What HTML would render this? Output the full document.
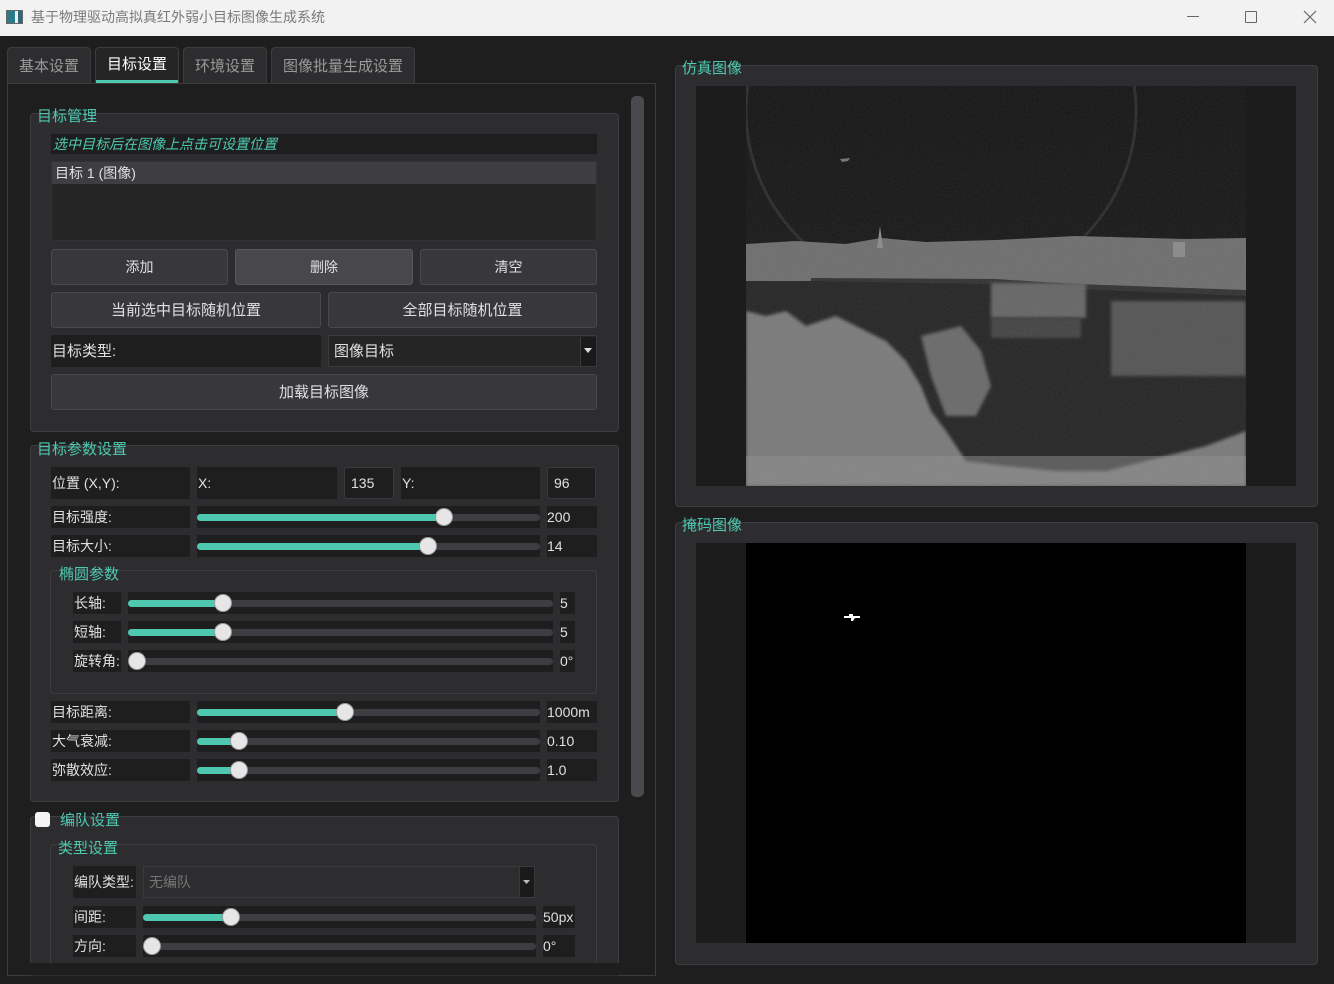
<!DOCTYPE html>
<html><head><meta charset="utf-8">
<style>
*{box-sizing:border-box;margin:0;padding:0}
body{width:1334px;height:984px;overflow:hidden;background:#1e1e1e;font-family:"Liberation Sans","Noto Sans CJK SC",sans-serif;font-size:14px;color:#e0e0e0;position:relative}
.a{position:absolute}
.tb{left:0;top:0;width:1334px;height:36px;background:#f2f2f2}
.tab{top:47px;height:36px;background:#2d2d30;border:1px solid #3c3c3f;border-bottom:none;border-radius:4px 4px 0 0;color:#9a9a9a;font-size:15px;text-align:center;line-height:38px}
.grp{background:#2d2d30;border:1px solid #3e3e42;border-radius:4px}
.gt{color:#4ec9b0;font-size:15px;line-height:18px}
.lbl{background:#1e1e1e;line-height:22px;padding-left:1px;color:#e0e0e0}
.btn{background:#38383c;border:1px solid #4a4a4e;border-radius:3px;text-align:center;color:#e0e0e0}
.sl{background:#1e1e1e}
.gr{position:absolute;left:0;right:0;top:50%;height:7px;margin-top:-3px;background:#3e3e42;border-radius:4px}
.fl{position:absolute;left:0;top:50%;height:7px;margin-top:-3px;background:#4ec9b0;border-radius:4px}
.hd{position:absolute;top:50%;width:18px;height:18px;margin:-9px 0 0 -9px;border-radius:50%;background:#e6e6e6;border:1px solid #999}
.val{background:#1e1e1e;line-height:22px;color:#e0e0e0}
</style></head><body>
<div class="a tb"></div>
<div class="a" style="left:6px;top:10px;width:17px;height:14px;border:1px solid #666;background:linear-gradient(90deg,#2a7a8a 0 55%,#eee 55% 75%,#2a6a7a 75%)"></div>
<div class="a" style="left:31px;top:8px;color:#7a7a7a;font-size:14px;line-height:18px">基于物理驱动高拟真红外弱小目标图像生成系统</div>
<div class="a" style="left:1187px;top:16px;width:12px;height:1px;background:#666"></div>
<div class="a" style="left:1245px;top:11px;width:12px;height:12px;border:1px solid #666;border-radius:1px"></div>
<svg class="a" style="left:1303px;top:10px" width="14" height="14"><path d="M1 1L13 13M13 1L1 13" stroke="#666" stroke-width="1.2"/></svg>

<div class="a tab" style="left:7px;width:84px">基本设置</div>
<div class="a tab" style="left:95px;width:84px;color:#fff;background:#252526;line-height:34px">目标设置<div class="a" style="left:0;right:0;bottom:0;height:3px;background:#4ec9b0"></div></div>
<div class="a tab" style="left:183px;width:84px">环境设置</div>
<div class="a tab" style="left:271px;width:144px">图像批量生成设置</div>
<div class="a" style="left:7px;top:83px;width:649px;height:893px;border:1px solid #3c3c3f;background:#1e1e1e"></div>
<div class="a" style="left:631px;top:96px;width:13px;height:701px;background:#4a4a4e;border-radius:5px"></div>

<!-- group 1 -->
<div class="a grp" style="left:30px;top:113px;width:589px;height:319px"></div>
<div class="a gt" style="left:37px;top:108px">目标管理</div>
<div class="a" style="left:51px;top:134px;width:546px;height:20px;background:#1e1e1e;color:#4ec9b0;font-style:italic;line-height:21px;padding-left:2px">选中目标后在图像上点击可设置位置</div>
<div class="a" style="left:51px;top:161px;width:546px;height:80px;background:#252526;border:1px solid #333;border-radius:2px"></div>
<div class="a" style="left:52px;top:162px;width:544px;height:22px;background:#3e3e42;line-height:22px;padding-left:3px">目标 1 (图像)</div>
<div class="a btn" style="left:51px;top:249px;width:177px;height:36px;line-height:35px">添加</div>
<div class="a btn" style="left:235px;top:249px;width:178px;height:36px;line-height:35px;background:#48484c;border-color:#58585c">删除</div>
<div class="a btn" style="left:420px;top:249px;width:177px;height:36px;line-height:35px">清空</div>
<div class="a btn" style="left:51px;top:292px;width:270px;height:36px;line-height:35px;font-size:15px">当前选中目标随机位置</div>
<div class="a btn" style="left:328px;top:292px;width:269px;height:36px;line-height:35px;font-size:15px">全部目标随机位置</div>
<div class="a lbl" style="left:51px;top:335px;width:270px;height:32px;line-height:33px;font-size:15px">目标类型:</div>
<div class="a" style="left:328px;top:335px;width:269px;height:32px;background:#252526;border:1px solid #3a3a3d;line-height:31px;padding-left:5px;font-size:15px">图像目标</div>
<div class="a" style="left:580px;top:337px;width:16px;height:29px;background:#1a1a1a;border-left:1px solid #3a3a3d"></div>
<svg class="a" style="left:584px;top:348px" width="8" height="5"><path d="M0 0H8L4 5Z" fill="#ddd"/></svg>
<div class="a btn" style="left:51px;top:374px;width:546px;height:36px;line-height:35px;font-size:15px">加载目标图像</div>

<!-- group 2 -->
<div class="a grp" style="left:30px;top:445px;width:589px;height:357px"></div>
<div class="a gt" style="left:37px;top:441px">目标参数设置</div>
<div class="a lbl" style="left:51px;top:467px;width:139px;height:32px;line-height:33px">位置 (X,Y):</div>
<div class="a lbl" style="left:197px;top:467px;width:140px;height:32px;line-height:33px">X:</div>
<div class="a" style="left:344px;top:467px;width:50px;height:32px;border:1px solid #3a3a3d;border-radius:3px;background:#1e1e1e;line-height:31px;padding-left:6px">135</div>
<div class="a lbl" style="left:401px;top:467px;width:139px;height:32px;line-height:33px">Y:</div>
<div class="a" style="left:547px;top:467px;width:49px;height:32px;border:1px solid #3a3a3d;border-radius:3px;background:#1e1e1e;line-height:31px;padding-left:6px">96</div>

<div class="a lbl" style="left:51px;top:506px;width:139px;height:22px">目标强度:</div>
<div class="a sl" style="left:197px;top:506px;width:343px;height:22px"><div class="gr"></div><div class="fl" style="width:247px"></div><div class="hd" style="left:247px"></div></div>
<div class="a val" style="left:547px;top:506px;width:50px;height:22px">200</div>
<div class="a lbl" style="left:51px;top:535px;width:139px;height:22px">目标大小:</div>
<div class="a sl" style="left:197px;top:535px;width:343px;height:22px"><div class="gr"></div><div class="fl" style="width:231px"></div><div class="hd" style="left:231px"></div></div>
<div class="a val" style="left:547px;top:535px;width:50px;height:22px">14</div>

<div class="a" style="left:50px;top:570px;width:547px;height:124px;border:1px solid #3e3e42;border-radius:4px"></div>
<div class="a gt" style="left:59px;top:566px">椭圆参数</div>
<div class="a lbl" style="left:73px;top:592px;width:48px;height:22px">长轴:</div>
<div class="a sl" style="left:128px;top:592px;width:425px;height:22px"><div class="gr"></div><div class="fl" style="width:95px"></div><div class="hd" style="left:95px"></div></div>
<div class="a val" style="left:560px;top:592px;width:15px;height:22px">5</div>
<div class="a lbl" style="left:73px;top:621px;width:48px;height:22px">短轴:</div>
<div class="a sl" style="left:128px;top:621px;width:425px;height:22px"><div class="gr"></div><div class="fl" style="width:95px"></div><div class="hd" style="left:95px"></div></div>
<div class="a val" style="left:560px;top:621px;width:15px;height:22px">5</div>
<div class="a lbl" style="left:73px;top:650px;width:48px;height:22px">旋转角:</div>
<div class="a sl" style="left:128px;top:650px;width:425px;height:22px"><div class="gr"></div><div class="hd" style="left:9px"></div></div>
<div class="a val" style="left:560px;top:650px;width:15px;height:22px">0°</div>

<div class="a lbl" style="left:51px;top:701px;width:139px;height:22px">目标距离:</div>
<div class="a sl" style="left:197px;top:701px;width:343px;height:22px"><div class="gr"></div><div class="fl" style="width:148px"></div><div class="hd" style="left:148px"></div></div>
<div class="a val" style="left:547px;top:701px;width:50px;height:22px">1000m</div>
<div class="a lbl" style="left:51px;top:730px;width:139px;height:22px">大气衰减:</div>
<div class="a sl" style="left:197px;top:730px;width:343px;height:22px"><div class="gr"></div><div class="fl" style="width:42px"></div><div class="hd" style="left:42px"></div></div>
<div class="a val" style="left:547px;top:730px;width:50px;height:22px">0.10</div>
<div class="a lbl" style="left:51px;top:759px;width:139px;height:22px">弥散效应:</div>
<div class="a sl" style="left:197px;top:759px;width:343px;height:22px"><div class="gr"></div><div class="fl" style="width:42px"></div><div class="hd" style="left:42px"></div></div>
<div class="a val" style="left:547px;top:759px;width:50px;height:22px">1.0</div>

<!-- group 3 -->
<div class="a grp" style="left:30px;top:816px;width:589px;height:160px;border-bottom:none;border-radius:4px 4px 0 0"></div>
<div class="a" style="left:35px;top:812px;width:15px;height:15px;background:#f4f4f4;border-radius:3px"></div>
<div class="a gt" style="left:60px;top:812px">编队设置</div>
<div class="a" style="left:50px;top:844px;width:547px;height:130px;border:1px solid #3e3e42;border-bottom:none;border-radius:4px 4px 0 0"></div>
<div class="a gt" style="left:58px;top:840px">类型设置</div>
<div class="a lbl" style="left:73px;top:866px;width:63px;height:32px;line-height:33px">编队类型:</div>
<div class="a" style="left:143px;top:866px;width:392px;height:32px;border:1px solid #3a3a3d;background:#2d2d30;line-height:31px;padding-left:5px;color:#777">无编队</div>
<div class="a" style="left:519px;top:867px;width:15px;height:30px;background:#1a1a1a;border-left:1px solid #3a3a3d"></div>
<svg class="a" style="left:523px;top:880px" width="7" height="4"><path d="M0 0H7L3.5 4Z" fill="#bbb"/></svg>
<div class="a lbl" style="left:73px;top:906px;width:63px;height:22px">间距:</div>
<div class="a sl" style="left:143px;top:906px;width:393px;height:22px"><div class="gr"></div><div class="fl" style="width:88px"></div><div class="hd" style="left:88px"></div></div>
<div class="a val" style="left:543px;top:906px;width:32px;height:22px">50px</div>
<div class="a lbl" style="left:73px;top:935px;width:63px;height:22px">方向:</div>
<div class="a sl" style="left:143px;top:935px;width:393px;height:22px"><div class="gr"></div><div class="hd" style="left:9px"></div></div>
<div class="a val" style="left:543px;top:935px;width:32px;height:22px">0°</div>
<div class="a" style="left:8px;top:963px;width:647px;height:12px;background:#1e1e1e"></div>

<!-- right -->
<div class="a grp" style="left:675px;top:65px;width:643px;height:442px"></div>
<div class="a gt" style="left:682px;top:60px">仿真图像</div>
<div class="a" style="left:696px;top:86px;width:600px;height:400px;background:#1c1c1c"></div>
<svg class="a" style="left:746px;top:86px" width="500" height="400" viewBox="0 0 500 400">
<defs>
<linearGradient id="sky" x1="0" y1="0" x2="0" y2="1"><stop offset="0" stop-color="#161616"/><stop offset="1" stop-color="#1e1e1e"/></linearGradient>
<filter id="bl"><feGaussianBlur stdDeviation="1.5"/></filter>
<filter id="nz"><feTurbulence type="fractalNoise" baseFrequency="0.6" numOctaves="2"/><feColorMatrix type="saturate" values="0"/><feComponentTransfer><feFuncA type="linear" slope="0.1"/></feComponentTransfer></filter>
</defs>
<rect width="500" height="400" fill="url(#sky)"/>
<ellipse cx="195" cy="25" rx="195" ry="185" fill="none" stroke="#2c2c2c" stroke-width="3"/>
<rect x="0" y="185" width="500" height="215" fill="#262626"/>
<path d="M0 158 L50 155 L100 158 L135 152 L180 156 L250 154 L330 150 L440 153 L500 152 L500 205 L330 200 L250 195 L0 195Z" fill="#6e6e6e"/>
<path d="M131 162 L134 140 L137 162Z" fill="#8a8a8a"/>
<rect x="427" y="156" width="12" height="15" fill="#8a8a8a"/>
<path d="M65 195 L240 198 L330 203 L500 210 L500 204 L330 198 L250 193 L65 192Z" fill="#333"/>
<rect x="245" y="197" width="95" height="35" fill="#666" filter="url(#bl)"/>
<rect x="245" y="232" width="90" height="20" fill="#444" filter="url(#bl)"/>
<rect x="365" y="215" width="135" height="75" fill="#555" filter="url(#bl)"/>
<path d="M0 400 L0 225 L20 230 L40 225 L60 240 L90 230 L120 245 L140 255 L160 275 L175 300 L185 325 L200 345 L220 375 L260 380 L310 385 L360 385 L400 375 L460 360 L500 345 L500 400Z" fill="#7a7a7a" filter="url(#bl)"/>
<path d="M175 250 L215 240 L235 265 L245 300 L230 330 L200 330 L185 290Z" fill="#6a6a6a" filter="url(#bl)"/>
<rect x="0" y="370" width="500" height="30" fill="#8e8e8e" opacity=".5"/>
<rect width="500" height="400" filter="url(#nz)"/>
<path d="M94 73 L104 72 L102 75 L96 76Z" fill="#777"/>
</svg>

<div class="a grp" style="left:675px;top:522px;width:643px;height:443px"></div>
<div class="a gt" style="left:682px;top:517px">掩码图像</div>
<div class="a" style="left:696px;top:543px;width:600px;height:400px;background:#1c1c1c"></div>
<div class="a" style="left:746px;top:543px;width:500px;height:400px;background:#000"></div>
<svg class="a" style="left:843px;top:613px" width="18" height="9"><path d="M1 3H17V5H12L10 8H8V5H1Z" fill="#fff"/><rect x="6" y="1" width="4" height="3" fill="#fff"/></svg>
</body></html>
